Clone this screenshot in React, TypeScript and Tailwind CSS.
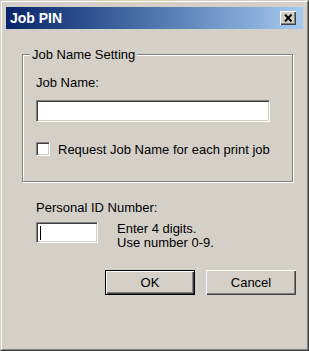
import React from 'react'

const font = { fontFamily: '"Liberation Sans", Arial, sans-serif' }

// sunken 3D edge used by edit boxes and the checkbox
const sunken =
  'bg-white border border-t-[#808080] border-l-[#808080] border-b-white border-r-white shadow-[inset_1px_1px_0_#404040,inset_-1px_-1px_0_#d4d0c8]'

function Button({ label, isDefault }: { label: string; isDefault?: boolean }) {
  return (
    <button
      className={
        'w-[90px] h-[25px] bg-[#d4d0c8] text-[13px] text-black flex items-center justify-center ' +
        (isDefault
          ? 'border border-black shadow-[inset_1px_1px_0_#fff,inset_-1px_-1px_0_#404040,inset_-2px_-2px_0_#808080]'
          : 'shadow-[inset_1px_1px_0_#fff,inset_-1px_-1px_0_#404040,inset_-2px_-2px_0_#808080]')
      }
    >
      {label}
    </button>
  )
}

export default function App() {
  return (
    <div className="w-[309px] h-[351px] bg-[#d4d0c8] text-black" style={font}>
      {/* window frame */}
      <div className="h-full border border-t-[#d4d0c8] border-l-[#d4d0c8] border-b-[#404040] border-r-[#404040]">
        <div className="h-full border border-t-white border-l-white border-b-[#808080] border-r-[#808080] px-[4px] pt-[5px]">
          {/* title bar */}
          <div className="h-[22px] flex items-center justify-between pl-[4px] pr-[7px] bg-gradient-to-r from-[#0a246a] to-[#a6caf0]">
            <span className="text-white font-bold text-[14px] leading-none">Job PIN</span>
            <button className="w-[16px] h-[14px] bg-[#d4d0c8] flex items-center justify-center shadow-[inset_1px_1px_0_#fff,inset_-1px_-1px_0_#404040,inset_-2px_-2px_0_#808080]">
              <svg width="9" height="8" viewBox="0 0 9 8">
                <path d="M1 0.5 L7.5 7.5 M7.5 0.5 L1 7.5" stroke="#000" strokeWidth="2" />
              </svg>
            </button>
          </div>

          {/* group box */}
          <fieldset className="mt-[18px] ml-[16px] w-[271px] border border-[#808080] shadow-[inset_1px_1px_0_#fff,1px_1px_0_#fff] pb-[25px]">
            <legend className="ml-[7px] px-[2px] bg-[#d4d0c8] text-[13px] leading-[15px]">Job Name Setting</legend>
            <div className="pl-[13px]">
              <div className="pt-[13px] text-[13px] leading-[15px]">Job Name:</div>
              <div className={'mt-[10px] w-[234px] h-[22px] ' + sunken} />
              <div className="mt-[20px] flex items-center gap-[8px] h-[14px]">
                <div className={'w-[14px] h-[14px] ' + sunken} />
                <span className="text-[13px] leading-[15px]">Request Job Name for each print job</span>
              </div>
            </div>
          </fieldset>

          {/* PIN entry */}
          <div className="ml-[30px] mt-[18px] text-[13px] leading-[15px]">Personal ID Number:</div>
          <div className="ml-[30px] mt-[7px] flex items-start gap-[19px]">
            <div className={'w-[62px] h-[21px] flex items-center pl-[3px] ' + sunken}>
              <span className="w-[1px] h-[14px] bg-black" />
            </div>
            <div className="text-[13px] leading-[14px]">
              <div>Enter 4 digits.</div>
              <div>Use number 0-9.</div>
            </div>
          </div>

          {/* buttons */}
          <div className="mt-[20px] flex justify-end gap-[11px] pr-[7px]">
            <Button label="OK" isDefault />
            <Button label="Cancel" />
          </div>
        </div>
      </div>
    </div>
  )
}
